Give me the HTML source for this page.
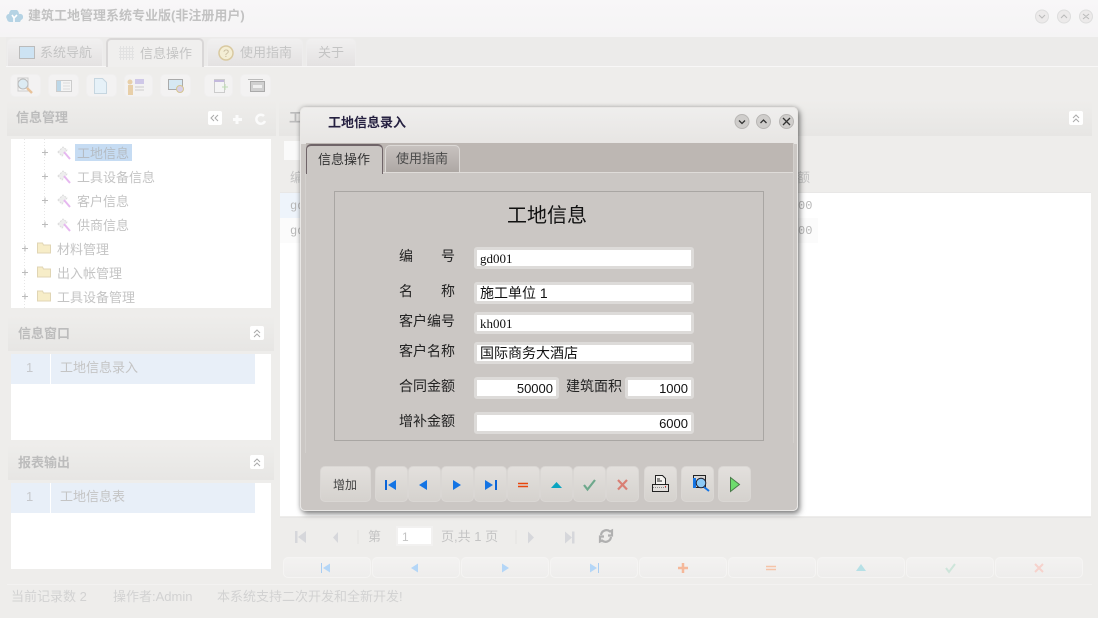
<!DOCTYPE html>
<html lang="zh-CN"><head><meta charset="utf-8"><title>建筑工地管理系统专业版</title>
<style>
*{box-sizing:border-box}
html,body{margin:0;padding:0;width:1098px;height:618px;overflow:hidden;background:#eeedeb}
body{position:relative;font-family:"Liberation Sans","Noto Sans CJK SC","WenQuanYi Zen Hei",sans-serif;font-size:13px;color:#bdbdbd}
div,svg,span.a{position:absolute}
.t{white-space:nowrap;line-height:16px}
.g{color:#c4c4c4}
.tab{border:1px solid #eeeded;border-bottom:0;border-radius:5px 5px 0 0;background:linear-gradient(#f1f0f0,#e4e2e2);height:28px;top:38px}
.tb{top:74px;height:23px;border:1px solid #f0efef;border-radius:5px;background:#f3f2f2}
.head{background:linear-gradient(#eeedeb,#e7e6e4);border-top:1px solid #eeedec}
.pb{width:88px;height:21px;top:557px;border:1px solid #f5f4f3;border-radius:5px;background:linear-gradient(#f3f2f1,#eeedec)}
.mb{top:466px;width:33px;height:36px;border:1px solid #dad7d4;border-radius:5px;background:linear-gradient(#e3e0dd,#d5d2ce)}
.inp{background:#fff;border:3px solid #dddbd9;border-radius:3px;height:22px;font-family:"Liberation Serif","WenQuanYi Zen Hei",serif;color:#111;font-size:14px;line-height:15px;padding:1px 3px;white-space:nowrap;outline:0}
.lb{color:#222;font-size:14px;white-space:nowrap;line-height:16px;font-family:"WenQuanYi Zen Hei","Noto Sans CJK SC",sans-serif}
.up{width:14px;height:14px;background:#fff;border-radius:2px}
</style></head><body>

<!-- title bar -->
<div style="left:0;top:0;width:1098px;height:37px;background:linear-gradient(#f8f7f8,#f5f4f5)"></div>
<svg style="left:6px;top:10px" width="17" height="14" viewBox="0 0 17 14"><path d="M1 9a3 3 0 0 1 2-5 5 5 0 0 1 10 0 3 3 0 0 1 2 6l-1 2H4a3 3 0 0 1-3-3z" fill="#b5d3e4"/><path d="M6 5l2 3 3-3M8 8v4" stroke="#fff" stroke-width="1.6" fill="none"/></svg>
<div class="t" style="left:28px;top:8px;font-size:13px;font-weight:bold;color:#c2c2c2">建筑工地管理系统专业版(非注册用户)</div>
<svg style="left:1034px;top:9px" width="60" height="15" viewBox="0 0 60 15" fill="none" stroke="#bbb"><circle cx="8" cy="7.5" r="6.5" fill="#eceaea" stroke="#ddd"/><circle cx="30" cy="7.5" r="6.5" fill="#eceaea" stroke="#ddd"/><circle cx="52" cy="7.5" r="6.5" fill="#eceaea" stroke="#ddd"/><path d="M5 6l3 3 3-3M27 9l3-3 3 3M49 5l6 5M55 5l-6 5"/></svg>

<!-- tabs -->
<div style="left:6px;top:37px;width:1092px;height:30px;background:#ecebea"></div>
<div style="left:6px;top:66px;width:1092px;height:1px;background:#f8f7f7"></div>
<div class="tab" style="left:7px;width:96px"></div>
<div class="tab" style="left:106px;width:98px;top:38px;height:29px;border:2px solid #d9d7d7;border-bottom:0;background:#f0efee"></div>
<div class="tab" style="left:207px;width:96px"></div>
<div class="tab" style="left:306px;width:50px"></div>
<svg style="left:19px;top:46px" width="16" height="13"><rect x=".5" y=".5" width="15" height="12" fill="#cde3f3" stroke="#bbb"/></svg>
<svg style="left:119px;top:46px" width="15" height="14" stroke="#e2e2e2"><path d="M1.500 0v14M4.500 0v14M7.500 0v14M10.500 0v14M13.500 0v14M0 2.500h15M0 5.500h15M0 8.500h15M0 11.500h15"/></svg>
<svg style="left:218px;top:45px" width="16" height="16"><circle cx="8" cy="8" r="7" fill="#f4eed4" stroke="#d9c9a0" stroke-width="1.5"/><text x="5" y="12" font-size="11" fill="#c9bda0" font-family="Liberation Sans">?</text></svg>
<div class="t g" style="left:40px;top:45px">系统导航</div>
<div class="t g" style="left:140px;top:46px">信息操作</div>
<div class="t g" style="left:240px;top:45px">使用指南</div>
<div class="t g" style="left:318px;top:45px">关于</div>

<!-- toolbar -->
<div class="tb" style="left:10px;width:31px"></div>
<div class="tb" style="left:48px;width:31px"></div>
<div class="tb" style="left:86px;width:31px"></div>
<div class="tb" style="left:124px;width:29px"></div>
<div class="tb" style="left:160px;width:31px"></div>
<div class="tb" style="left:204px;width:29px"></div>
<div class="tb" style="left:240px;width:31px"></div>
<svg style="left:10px;top:74px" width="265" height="23" fill="none">
<path d="M8 4h10v13H8z" fill="#f6f6f6" stroke="#ccc"/><circle cx="13" cy="10" r="5" fill="#dcebf3" stroke="#bbb"/><path d="M17 14l5 5" stroke="#e8c29a" stroke-width="2.5"/>
<rect x="46.500" y="6.500" width="15" height="11" fill="#f4f4f4" stroke="#ccc"/><rect x="47" y="7" width="4" height="10" fill="#bcd7e8"/><path d="M53 9h7M53 12h7M53 15h7" stroke="#ddd"/>
<path d="M84.500 4.500h8l4 4v11h-12z" fill="#e6f1f8" stroke="#c6d6e0"/>
<circle cx="120" cy="8" r="2.500" fill="#e8cfa8"/><rect x="118" y="11" width="5" height="10" fill="#e8cfa8"/><rect x="125" y="5" width="9" height="5" fill="#cfc8e8"/><path d="M125 13h9M125 16h9" stroke="#ccc"/>
<rect x="158.500" y="5.500" width="14" height="10" fill="#d6e8f3" stroke="#aaa"/><circle cx="170" cy="15" r="3.500" fill="#d8d0e8" stroke="#d6c58e"/>
<rect x="204.500" y="5.500" width="10" height="13" fill="#f4f4f4" stroke="#ccc"/><path d="M204 7h10" stroke="#c4b9dd" stroke-width="2"/><path d="M212 13h6M215 10v6" stroke="#bfdcb4"/>
<rect x="240.500" y="7.500" width="14" height="10" fill="#d0d0d0" stroke="#aaa"/><rect x="243" y="11" width="9" height="3" fill="#f0f0f0"/><path d="M238 5.500h15" stroke="#bbb"/>
</svg>

<!-- left panel 1 -->
<div class="head" style="left:7px;top:100px;width:269px;height:36px"></div>
<div class="t" style="left:16px;top:110px;font-weight:bold;color:#bcbcbc">信息管理</div>
<div class="up" style="left:208px;top:111px"></div>
<svg style="left:208px;top:111px" width="60" height="16" fill="none"><path d="M6 4l-3 3 3 3M10 4l-3 3 3 3" stroke="#aaa"/><path d="M29 4v9M25 8.500h9" stroke="#fbfbfb" stroke-width="3"/><path d="M56 5a4.500 4.500 0 1 0 1 5" stroke="#fbfbfb" stroke-width="2.500"/></svg>
<div style="left:11px;top:139px;width:260px;height:169px;background:#fff"></div>
<svg style="left:11px;top:139px" width="60" height="169" stroke="#e6e6e6" fill="none"><path stroke-dasharray="1 2" d="M13.500 0v169M33.500 0v90"/><path stroke="#bbb" d="M31 13.500h6M34 10.500v6M31 37.500h6M34 34.500v6M31 61.500h6M34 58.500v6M31 85.500h6M34 82.500v6M11 109.500h6M14 106.500v6M11 133.500h6M14 130.500v6M11 157.500h6M14 154.500v6"/></svg>
<svg style="left:56px;top:144px" width="18" height="90" fill="none">
<g id="h"><path d="M2 8l5-5 4 3-5 6z" fill="#eeeeee" stroke="#dcdcdc" stroke-dasharray="2 1"/><path d="M8 8l6 7" stroke="#e6b8f0" stroke-width="2"/></g>
<use href="#h" y="24"/><use href="#h" y="48"/><use href="#h" y="72"/></svg>
<div style="left:75px;top:144px;width:57px;height:17px;background:#c6dcf3"></div>
<div class="t g" style="left:77px;top:146px;color:#b5bcc4">工地信息</div>
<div class="t g" style="left:77px;top:170px">工具设备信息</div>
<div class="t g" style="left:77px;top:194px">客户信息</div>
<div class="t g" style="left:77px;top:218px">供商信息</div>
<svg style="left:36px;top:240px" width="17" height="62" fill="#f7edc8" stroke="#e0d5b4"><path d="M1.500 13V3h5l1 2h7v8z"/><path d="M1.500 37V27h5l1 2h7v8z"/><path d="M1.500 61V51h5l1 2h7v8z"/></svg>
<div class="t g" style="left:57px;top:242px">材料管理</div>
<div class="t g" style="left:57px;top:266px">出入帐管理</div>
<div class="t g" style="left:57px;top:290px">工具设备管理</div>

<!-- left panel 2 -->
<div class="head" style="left:8px;top:315px;width:266px;height:36px"></div>
<div class="t" style="left:18px;top:326px;font-weight:bold;color:#bcbcbc">信息窗口</div>
<div class="up" style="left:250px;top:326px"></div>
<svg style="left:250px;top:326px" width="14" height="14" fill="none" stroke="#aaa"><path d="M4 7l3-3 3 3M4 11l3-3 3 3"/></svg>
<div style="left:11px;top:354px;width:260px;height:86px;background:#fff"></div>
<div style="left:11px;top:354px;width:39px;height:30px;background:#e8eff8"></div>
<div style="left:51px;top:354px;width:204px;height:30px;background:#e8eff8"></div>
<div class="t g" style="left:26px;top:360px;color:#c6c8cc">1</div>
<div class="t g" style="left:60px;top:360px">工地信息录入</div>

<!-- left panel 3 -->
<div class="head" style="left:8px;top:444px;width:266px;height:36px"></div>
<div class="t" style="left:18px;top:455px;font-weight:bold;color:#bcbcbc">报表输出</div>
<div class="up" style="left:250px;top:455px"></div>
<svg style="left:250px;top:455px" width="14" height="14" fill="none" stroke="#aaa"><path d="M4 7l3-3 3 3M4 11l3-3 3 3"/></svg>
<div style="left:11px;top:483px;width:260px;height:86px;background:#fff"></div>
<div style="left:11px;top:483px;width:39px;height:30px;background:#e8eff8"></div>
<div style="left:51px;top:483px;width:204px;height:30px;background:#e8eff8"></div>
<div class="t g" style="left:26px;top:489px;color:#c6c8cc">1</div>
<div class="t g" style="left:60px;top:489px">工地信息表</div>

<!-- main panel -->
<div class="head" style="left:279px;top:100px;width:813px;height:36px"></div>
<div class="t" style="left:289px;top:110px;font-weight:bold;color:#bcbcbc">工地信息</div>
<div class="up" style="left:1069px;top:111px"></div>
<svg style="left:1069px;top:111px" width="14" height="14" fill="none" stroke="#aaa"><path d="M4 7l3-3 3 3M4 11l3-3 3 3"/></svg>
<div style="left:284px;top:141px;width:16px;height:19px;background:#fafafa"></div>
<div style="left:280px;top:193px;width:811px;height:323px;background:#fff"></div>
<div style="left:280px;top:192px;width:811px;height:1px;background:#e8e7e6"></div>
<div style="left:280px;top:193px;width:30px;height:25px;background:#eef4fb"></div>
<div style="left:280px;top:218px;width:538px;height:25px;background:#fbfbfb"></div>
<div class="t g" style="left:290px;top:170px">编</div>
<div class="t g" style="left:797px;top:170px">额</div>
<div class="t" style="left:290px;top:198px;font-family:'Liberation Mono',monospace;font-size:12px;color:#b8b8b8">gd001</div>
<div class="t" style="left:290px;top:223px;font-family:'Liberation Mono',monospace;font-size:12px;color:#b8b8b8">gd002</div>
<div class="t" style="left:798px;top:198px;font-family:'Liberation Mono',monospace;font-size:12px;color:#b8b8b8">00</div>
<div class="t" style="left:798px;top:223px;font-family:'Liberation Mono',monospace;font-size:12px;color:#b8b8b8">00</div>

<!-- pager -->
<div style="left:280px;top:517px;width:811px;height:1px;background:#e8e7e6"></div>
<svg style="left:280px;top:522px" width="350" height="28"><g fill="#d6d7db"><rect x="15" y="9" width="2.500" height="12"/><path d="M26 9v12l-8-6zM58 10v11l-5-5.500zM248 9.500v12l6-6zM285 9.500v12l7-6z"/><rect x="292" y="9.500" width="2.500" height="12"/></g><path d="M78 8v14M236 8v14M322 8v14" stroke="#e4e3e2"/><path d="M321 13a5.500 5.500 0 0 1 9-3.500l2-1v5h-4M331 15a5.500 5.500 0 0 1-9 3.500l-2 1v-5h4" fill="none" stroke="#b0b0b0" stroke-width="2.200"/></svg>
<div class="t g" style="left:368px;top:529px">第</div>
<div style="left:396px;top:526px;width:37px;height:20px;background:#fff;border:2px solid #f2f1f0"></div>
<div class="t g" style="left:402px;top:529px;font-size:12px">1</div>
<div class="t g" style="left:441px;top:529px">页,共 1 页</div>

<div class="pb" style="left:283px"></div>
<div class="pb" style="left:372px"></div>
<div class="pb" style="left:461px"></div>
<div class="pb" style="left:550px"></div>
<div class="pb" style="left:639px"></div>
<div class="pb" style="left:728px"></div>
<div class="pb" style="left:817px"></div>
<div class="pb" style="left:906px"></div>
<div class="pb" style="left:995px"></div>
<svg style="left:282px;top:557px" width="800" height="21" fill="none">
<path d="M39.500 6v10" stroke="#a9cdf2"/><path d="M41 11l7-4.500v9zM129 11l7-4.500v9zM220 6.500v9l7-4.500zM308 6.500v9l7-4.500z" fill="#b4d6f7"/><path d="M316.500 6v10" stroke="#a9cdf2"/>
<path d="M401 6v10M396 11h10" stroke="#f5b89a" stroke-width="2.500"/><path d="M484 9.500h10M484 12.500h10" stroke="#f5c4a8" stroke-width="1.500"/>
<path d="M574 14l5-7 5 7z" fill="#b6e0e6"/><path d="M664 11l3 4 6-8" stroke="#cde5da" stroke-width="2"/><path d="M753 7l8 8M761 7l-8 8" stroke="#f6d2cc" stroke-width="2"/></svg>

<!-- status -->
<div style="left:7px;top:584px;width:1085px;height:1px;background:#f3f2f1"></div>
<div class="t" style="left:11px;top:589px;color:#d2d2d2">当前记录数 2</div>
<div class="t" style="left:113px;top:589px;color:#d2d2d2">操作者:Admin</div>
<div class="t" style="left:217px;top:589px;color:#d2d2d2">本系统支持二次开发和全新开发!</div>

<!-- dialog -->
<div style="left:300px;top:107px;width:498px;height:404px;background:linear-gradient(#efeeed 0,#e7e5e3 36px,#cbc7c4 36px);border:1px solid #e9e7e5;border-radius:5px;box-shadow:2px 3px 6px rgba(50,50,50,.55),0 0 4px rgba(60,60,60,.3)"></div>
<div style="left:793px;top:143px;width:1px;height:300px;background:#d3d0cd"></div>
<div style="left:305px;top:173px;width:1px;height:280px;background:#d3d0cd"></div>
<div class="t" style="left:328px;top:114px;font-weight:bold;color:#252040;font-family:'WenQuanYi Zen Hei','Noto Sans CJK SC',sans-serif">工地信息录入</div>
<svg style="left:734px;top:113px" width="60" height="17" viewBox="0 0 60 17" fill="none"><g stroke="#b8b6b4" fill="#cfcdcb"><circle cx="8" cy="8.500" r="7"/><circle cx="29.500" cy="8.500" r="7"/><circle cx="52.500" cy="8.500" r="7"/></g><path d="M5 7.500l3 3 3-3M26.500 10l3-3 3 3M49 5l7 7M56 5l-7 7" stroke="#333" stroke-width="1.300"/></svg>
<div style="left:306px;top:143px;width:487px;height:29px;background:#bdb7b3"></div>
<div style="left:306px;top:172px;width:487px;height:1px;background:#dfdcd9"></div>
<div style="left:306px;top:144px;width:77px;height:30px;background:#cbc7c4;border:2px solid #6f6468;border-bottom:0;border-radius:5px 5px 0 0;border-left-width:1px;border-right-width:1px"></div>
<div style="left:385px;top:145px;width:75px;height:27px;background:linear-gradient(#c7c2bf,#aea8a4);border:1px solid #dcd9d6;border-bottom:0;border-radius:5px 5px 0 0"></div>
<div class="t" style="left:318px;top:152px;color:#333">信息操作</div>
<div class="t" style="left:396px;top:151px;color:#4a4a4a">使用指南</div>

<div style="left:334px;top:191px;width:430px;height:250px;border:1px solid #a9a6a3"></div>
<div class="t" style="left:507px;top:203px;font-size:20px;line-height:22px;color:#111;font-family:'WenQuanYi Zen Hei','Noto Sans CJK SC',sans-serif">工地信息</div>

<div class="lb" style="left:399px;top:248px">编</div><div class="lb" style="left:441px;top:248px">号</div>
<div class="lb" style="left:399px;top:283px">名</div><div class="lb" style="left:441px;top:283px">称</div>
<div class="lb" style="left:399px;top:313px">客户编号</div>
<div class="lb" style="left:399px;top:343px">客户名称</div>
<div class="lb" style="left:399px;top:378px">合同金额</div>
<div class="lb" style="left:566px;top:378px">建筑面积</div>
<div class="lb" style="left:399px;top:413px">增补金额</div>

<div class="inp" style="left:474px;top:247px;width:220px;font-size:13px;padding-top:1px">gd001</div>
<div class="inp" style="left:474px;top:282px;width:220px;font-family:'WenQuanYi Zen Hei','Liberation Sans',sans-serif">施工单位 1</div>
<div class="inp" style="left:474px;top:312px;width:220px;font-size:13px;padding-top:1px">kh001</div>
<div class="inp" style="left:474px;top:342px;width:220px;font-family:'WenQuanYi Zen Hei','Liberation Sans',sans-serif">国际商务大酒店</div>
<div class="inp" style="left:474px;top:377px;width:85px;text-align:right;font-family:'WenQuanYi Zen Hei','Liberation Sans',sans-serif;font-size:13px;padding-top:1px">50000</div>
<div class="inp" style="left:625px;top:377px;width:69px;text-align:right;font-family:'WenQuanYi Zen Hei','Liberation Sans',sans-serif;font-size:13px;padding-top:1px">1000</div>
<div class="inp" style="left:474px;top:412px;width:220px;text-align:right;font-family:'WenQuanYi Zen Hei','Liberation Sans',sans-serif;font-size:13px;padding-top:1px">6000</div>

<!-- dialog buttons -->
<div class="mb" style="left:320px;width:51px"></div>
<div class="t" style="left:333px;top:477px;color:#444;font-size:12px">增加</div>
<div class="mb" style="left:375px"></div>
<div class="mb" style="left:408px"></div>
<div class="mb" style="left:441px"></div>
<div class="mb" style="left:474px"></div>
<div class="mb" style="left:507px"></div>
<div class="mb" style="left:540px"></div>
<div class="mb" style="left:573px"></div>
<div class="mb" style="left:606px"></div>
<div class="mb" style="left:644px"></div>
<div class="mb" style="left:681px"></div>
<div class="mb" style="left:718px"></div>
<svg style="left:375px;top:466px" width="380" height="36" fill="none">
<rect x="10" y="14" width="2" height="10" fill="#0a64d8"/><path d="M13 19l8-5v10z" fill="#1474e4"/>
<path d="M44 19l8-5v10z" fill="#1474e4"/>
<path d="M78 14v10l8-5z" fill="#1474e4"/>
<path d="M110 14v10l8-5z" fill="#1474e4"/><rect x="120" y="14" width="2" height="10" fill="#0a64d8"/>
<path d="M143 17.500h10M143 20.500h10" stroke="#e8450c" stroke-width="1.500"/>
<path d="M176 22l5.500-6 5.500 6z" fill="#0aa4c0"/>
<path d="M209 19l3.500 4.500L220 14" stroke="#6ea88c" stroke-width="2.200"/>
<path d="M243 14l9 9.500M252 14l-9 9.500" stroke="#d97f74" stroke-width="2.200"/>
<path d="M280.500 9.500h7l3 3v6h-10z" fill="#f4f2ef" stroke="#222"/><path d="M282 13h3M282 15h5" stroke="#222"/><rect x="277.500" y="18.500" width="16" height="7" fill="#e2dfdc" stroke="#222"/><path d="M278 21.500h14" stroke="#888" stroke-dasharray="1 1"/><rect x="290" y="20" width="1" height="1" fill="#d22"/>
<rect x="318.500" y="9.500" width="12" height="12" fill="#d8d6d4" stroke="#222"/><rect x="318" y="12" width="3" height="10" fill="#1474e4"/><circle cx="326" cy="17" r="4.800" fill="#8ccaf6" stroke="#223"/><path d="M329 21l5 4" stroke="#1474e4" stroke-width="2"/>
<path d="M355.500 11.500v14l9-7z" fill="#6ddc6d" stroke="#4a7a4a"/>
</svg>
</body></html>
